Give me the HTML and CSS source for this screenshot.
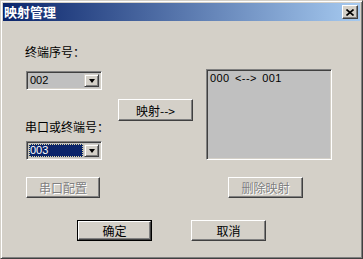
FILE: index.html
```html
<!DOCTYPE html>
<html lang="zh-CN">
  <head>
    <meta charset="UTF-8" />
    <title>映射管理</title>
    <link rel="stylesheet" href="styles.css">
  </head>
  <body>
    <div class="window">
      <div class="titlebar">
        <span class="title">映射管理</span>
        <span class="close-btn">
          <svg width="8" height="7" viewBox="0 0 8 7">
            <path d="M0.5 0.5 L7.5 6.5 M7.5 0.5 L0.5 6.5" stroke="#000" stroke-width="1.6" />
          </svg>
        </span>
      </div>
      <div class="content">
        <div class="main">
          <div class="left-col">
            <div class="label">终端序号：</div>
            <div class="combo combo-first">
              <span class="combo-value">002</span>
              <span class="drop-btn"><span class="arrow"></span></span>
            </div>
            <div class="label label-second">串口或终端号：</div>
            <div class="combo combo-second">
              <span class="combo-value selected">003</span>
              <span class="drop-btn"><span class="arrow"></span></span>
            </div>
          </div>
          <button class="btn map-btn">映射--&gt;</button>
          <div class="listbox">
            <div class="list-item">000 &lt;--&gt; 001</div>
          </div>
        </div>
        <div class="row row-tools">
          <button class="btn disabled serial-btn">串口配置</button>
          <button class="btn disabled delete-btn">删除映射</button>
        </div>
        <div class="row row-confirm">
          <button class="btn default ok-btn">确定</button>
          <button class="btn cancel-btn">取消</button>
        </div>
      </div>
    </div>
  </body>
</html>
```
FILE: styles.css
```css
body {
  margin: 0;
  padding: 0;
  font-family: "Liberation Sans", "Noto Sans CJK SC", sans-serif;
  font-size: 12px;
  color: #000;
  background: #d4d0c8;
}
.window {
  width: 363px;
  height: 259px;
  box-sizing: border-box;
  background: #d4d0c8;
  border: 1px solid;
  border-color: #d4d0c8 #404040 #404040 #d4d0c8;
  box-shadow: inset 1px 1px #fff, inset -1px -1px #808080;
  padding: 2px;
  display: flex;
  flex-direction: column;
}
.titlebar {
  height: 18px;
  background: linear-gradient(to right, #0a246a, #a6caf0);
  display: flex;
  align-items: center;
  padding: 0 2px 0 1px;
}
.title {
  color: #fff;
  font-weight: bold;
  font-size: 13px;
  line-height: 18px;
  font-family: "Noto Sans CJK SC", sans-serif;
}
.close-btn {
  margin-left: auto;
  width: 16px;
  height: 14px;
  box-sizing: border-box;
  background: #d4d0c8;
  border: 1px solid;
  border-color: #fff #404040 #404040 #fff;
  box-shadow: inset -1px -1px #808080;
  display: flex;
  align-items: center;
  justify-content: center;
}
.content {
  padding: 24px 0 0 23px;
}
.main {
  display: flex;
  align-items: flex-start;
}
.left-col {
  width: 76px;
}
.label {
  margin-left: -1px;
  line-height: 14px;
  height: 14px;
  white-space: nowrap;
  font-family: "Noto Sans CJK SC", sans-serif;
}
.label-second {
  margin-top: 30px;
}
.combo {
  height: 19px;
  box-sizing: border-box;
  border: 1px solid;
  border-color: #808080 #fff #fff #808080;
  box-shadow: inset 1px 1px #404040, inset -1px -1px #d4d0c8;
  background: #c0c0c0;
  display: flex;
  align-items: center;
  padding: 2px;
}
.combo-first {
  margin-top: 12px;
}
.combo-second {
  margin-top: 7px;
}
.combo-value {
  flex: 1;
  font-size: 11px;
  line-height: 13px;
  height: 13px;
  padding-left: 1px;
}
.combo-value.selected {
  background: #0a246a;
  color: #fff;
  outline: 1px dotted #e0d8a0;
  outline-offset: -1px;
  margin-right: 1px;
}
.drop-btn {
  width: 15px;
  height: 13px;
  box-sizing: border-box;
  background: #d4d0c8;
  border: 1px solid;
  border-color: #d4d0c8 #404040 #404040 #d4d0c8;
  box-shadow: inset 1px 1px #fff, inset -1px -1px #808080;
  display: flex;
  align-items: center;
  justify-content: center;
}
.arrow {
  width: 0;
  height: 0;
  border-left: 3.5px solid transparent;
  border-right: 3.5px solid transparent;
  border-top: 4px solid #000;
  margin-top: 1px;
}
.btn {
  box-sizing: border-box;
  height: 21px;
  padding: 0;
  background: #d4d0c8;
  border: 1px solid;
  border-color: #fff #404040 #404040 #fff;
  box-shadow: inset -1px -1px #808080;
  font-family: "Noto Sans CJK SC", sans-serif;
  font-size: 12px;
  color: #000;
}
.btn.disabled {
  color: #808080;
  text-shadow: 1px 1px #fff;
}
.btn.default {
  outline: 1px solid #000;
  box-shadow: inset -1px -1px #808080;
}
.map-btn {
  width: 75px;
  height: 22px;
  margin: 54px 0 0 16px;
}
.listbox {
  width: 126px;
  height: 91px;
  margin: 24px 0 0 13px;
  box-sizing: border-box;
  background: #c0c0c0;
  border: 1px solid;
  border-color: #808080 #fff #fff #808080;
  box-shadow: inset 1px 1px #404040, inset -1px -1px #d4d0c8;
  padding: 2px 3px;
}
.list-item {
  font-size: 11px;
  line-height: 13px;
  letter-spacing: 0.4px;
  word-spacing: 2px;
  white-space: pre;
}
.row {
  display: flex;
}
.row-tools {
  margin-top: 17px;
}
.serial-btn {
  width: 74px;
}
.delete-btn {
  width: 75px;
  margin-left: 128px;
}
.row-confirm {
  margin-top: 22px;
}
.ok-btn {
  width: 73px;
  height: 19px;
  margin: 1px 0 0 52px;
}
.cancel-btn {
  width: 75px;
  margin-left: 40px;
}
```
